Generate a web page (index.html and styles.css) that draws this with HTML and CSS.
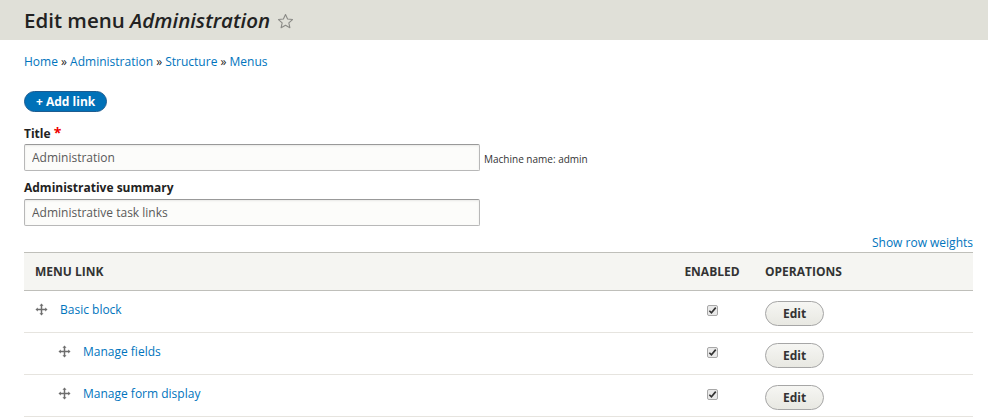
FILE: index.html
```html
<!DOCTYPE html>
<html lang="en">
<head>
<meta charset="utf-8">
<title>Edit menu Administration</title>
<link rel="stylesheet" href="styles.css">
</head>
<body>
<header class="title-bar">
  <h1 class="page-title">Edit menu <em>Administration</em><svg class="star" viewBox="0 0 20 20" width="17" height="17"><path d="M10 1.8l2.45 5.3 5.8.6-4.35 3.9 1.25 5.7L10 14.4l-5.15 2.9 1.25-5.7L1.75 7.7l5.8-.6z" fill="none" stroke="#8a8a86" stroke-width="1.3" stroke-linejoin="round"/></svg></h1>
</header>
<main class="content">
  <nav class="breadcrumb"><a href="#">Home</a> » <a href="#">Administration</a> » <a href="#">Structure</a> » <a href="#">Menus</a></nav>
  <div class="actions"><a class="button-primary" href="#">+ Add link</a></div>

  <div class="form-item">
    <label class="form-label">Title <span class="required">*</span></label>
    <div class="field-row">
      <input class="form-text" type="text" value="Administration">
      <span class="machine-name">Machine name: admin</span>
    </div>
  </div>
  <div class="form-item">
    <label class="form-label">Administrative summary</label>
    <div class="field-row">
      <input class="form-text" type="text" value="Administrative task links">
    </div>
  </div>

  <div class="table-tools"><a href="#">Show row weights</a></div>
  <table class="menu-table">
    <thead>
      <tr><th class="col-link">Menu link</th><th class="col-enabled">Enabled</th><th class="col-ops">Operations</th></tr>
    </thead>
    <tbody>
      <tr>
        <td class="col-link"><span class="drag"><svg viewBox="0 0 14 14" width="13" height="13"><path d="M7 0.5L9.2 3H7.8v3.2H11V4.8L13.5 7 11 9.2V7.8H7.8V11h1.4L7 13.5 4.8 11h1.4V7.8H3v1.4L0.5 7 3 4.8v1.4h3.2V3H4.8z" fill="#6e6e6e"/></svg></span><a href="#">Basic block</a></td>
        <td class="col-enabled"><span class="checkbox"><svg viewBox="0 0 10 10" width="9" height="9"><path d="M1.5 5.3l2.3 2.3L8.6 1.8" fill="none" stroke="#333" stroke-width="1.8"/></svg></span></td>
        <td class="col-ops"><a class="button" href="#">Edit</a></td>
      </tr>
      <tr>
        <td class="col-link"><span class="indent"></span><span class="drag"><svg viewBox="0 0 14 14" width="13" height="13"><path d="M7 0.5L9.2 3H7.8v3.2H11V4.8L13.5 7 11 9.2V7.8H7.8V11h1.4L7 13.5 4.8 11h1.4V7.8H3v1.4L0.5 7 3 4.8v1.4h3.2V3H4.8z" fill="#6e6e6e"/></svg></span><a href="#">Manage fields</a></td>
        <td class="col-enabled"><span class="checkbox"><svg viewBox="0 0 10 10" width="9" height="9"><path d="M1.5 5.3l2.3 2.3L8.6 1.8" fill="none" stroke="#333" stroke-width="1.8"/></svg></span></td>
        <td class="col-ops"><a class="button" href="#">Edit</a></td>
      </tr>
      <tr>
        <td class="col-link"><span class="indent"></span><span class="drag"><svg viewBox="0 0 14 14" width="13" height="13"><path d="M7 0.5L9.2 3H7.8v3.2H11V4.8L13.5 7 11 9.2V7.8H7.8V11h1.4L7 13.5 4.8 11h1.4V7.8H3v1.4L0.5 7 3 4.8v1.4h3.2V3H4.8z" fill="#6e6e6e"/></svg></span><a href="#">Manage form display</a></td>
        <td class="col-enabled"><span class="checkbox"><svg viewBox="0 0 10 10" width="9" height="9"><path d="M1.5 5.3l2.3 2.3L8.6 1.8" fill="none" stroke="#333" stroke-width="1.8"/></svg></span></td>
        <td class="col-ops"><a class="button" href="#">Edit</a></td>
      </tr>
    </tbody>
  </table>
</main>
</body>
</html>
```
FILE: styles.css
```css
* { box-sizing: border-box; }
html, body { margin: 0; padding: 0; background: #fff; }
body {
  font-family: "Open Sans", "DejaVu Sans", sans-serif;
  font-size: 12px;
  color: #222;
}
a { color: #0074bd; text-decoration: none; }

.title-bar {
  background: #e0e0d8;
  height: 40px;
  padding: 0 24px;
  display: flex;
  align-items: center;
}
.page-title {
  margin: 0;
  font-size: 20.5px;
  font-weight: 600;
  color: #222;
  line-height: 26px;
}
.page-title em { font-style: italic; }
.star { margin-left: 7px; vertical-align: -2px; }

.content { padding: 0 15px 0 24px; }

.breadcrumb { padding-top: 14px; height: 37px; line-height: 16px; }

.actions { padding-top: 14px; height: 55px; }
.button-primary {
  display: inline-block;
  background: #0071b8;
  color: #fff;
  font-weight: bold;
  font-size: 12px;
  line-height: 19px;
  height: 21px;
  padding: 0 11px;
  border-radius: 11px;
  border: 1px solid #1e5c90;
}

.form-label {
  display: block;
  font-weight: bold;
  font-size: 12px;
  line-height: 16px;
  height: 19px;
  margin-top: -7px;
}
.required { color: #e00; font-size: 14px; }
.field-row { display: flex; align-items: center; gap: 4px; height: 27px; margin-bottom: 16px; }
.form-text {
  width: 456px;
  height: 27px;
  border: 1px solid #b8b8b8;
  border-top-color: #999;
  border-radius: 2px;
  background: #fcfcfa;
  padding: 0 7px;
  font-family: inherit;
  font-size: 12px;
  color: #595959;
  box-shadow: inset 0 1px 2px rgba(0,0,0,0.08);
}
.machine-name { font-size: 10px; color: #333; margin-top: 2px; }

.table-tools { text-align: right; line-height: 16px; height: 17px; margin-top: -7px; }

.menu-table { width: 100%; border-collapse: collapse; }
.menu-table th {
  background: #f5f5f2;
  border-top: 1px solid #bfbfba;
  border-bottom: 1px solid #bfbfba;
  height: 38px;
  padding: 0 11px;
  text-align: left;
  text-transform: uppercase;
  font-weight: bold;
  font-size: 12px;
  color: #333;
}
.menu-table th.col-enabled, .menu-table td.col-enabled { text-align: center; width: 84px; }
.menu-table th.col-ops { width: 219px; }
.menu-table td {
  height: 42px;
  border-bottom: 1px solid #e6e4df;
  padding: 0 11px;
  vertical-align: middle;
}
.menu-table td.col-link { padding-bottom: 3px; }
.indent { display: inline-block; width: 23px; }
.drag { display: inline-block; width: 25px; vertical-align: -2px; }
.checkbox {
  display: inline-flex;
  width: 11px;
  height: 11px;
  border: 1px solid #a8a8a8;
  border-radius: 2px;
  background: #e9e9e9;
  align-items: center;
  justify-content: center;
  margin-bottom: 4px;
  vertical-align: middle;
}
.menu-table td.col-ops { padding-top: 3px; }
.button {
  display: inline-block;
  width: 59px;
  height: 25px;
  line-height: 23px;
  text-align: center;
  border: 1px solid #a6a6a6;
  border-radius: 13px;
  background: linear-gradient(#f6f6f3, #e8e8e2);
  color: #333;
  font-weight: bold;
  font-size: 12px;
}
```
